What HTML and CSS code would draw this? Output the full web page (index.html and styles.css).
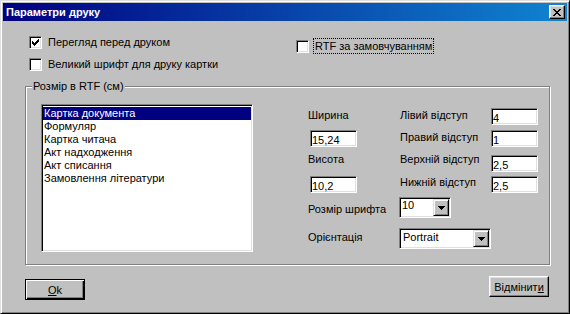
FILE: index.html
```html
<!DOCTYPE html>
<html lang="uk">
<head>
  <meta charset="UTF-8">
  <title>Параметри друку</title>
  <link rel="stylesheet" href="styles.css">
</head>
<body>
  <div class="window">
    <div class="titlebar">
      <span class="titlebar__text">Параметри друку</span>
      <button class="titlebar__close" type="button">
        <svg width="8" height="7" viewBox="0 0 8 7" shape-rendering="crispEdges"><path d="M0 0h2v1H0z M6 0h2v1H6z M1 1h2v1H1z M5 1h2v1H5z M2 2h4v1H2z M3 3h2v1H3z M2 4h4v1H2z M1 5h2v1H1z M5 5h2v1H5z M0 6h2v1H0z M6 6h2v1H6z" fill="#000"/></svg>
      </button>
    </div>

    <div class="dialog">
      <div class="options">
        <div class="options__col">
          <label class="check">
            <span class="check__box">
              <svg width="7" height="7" viewBox="0 0 7 7" shape-rendering="crispEdges"><path d="M0 2h1v3H0z M1 3h1v3H1z M2 4h1v3H2z M3 3h1v3H3z M4 2h1v3H4z M5 1h1v3H5z M6 0h1v3H6z" fill="#000"/></svg>
            </span>
            <span class="check__text">Перегляд перед друком</span>
          </label>
          <label class="check">
            <span class="check__box"></span>
            <span class="check__text">Великий шрифт для друку картки</span>
          </label>
        </div>
        <div class="options__col options__col--right">
          <label class="check check--focus">
            <span class="check__box"></span>
            <span class="check__text">RTF за замовчуванням</span>
          </label>
        </div>
      </div>

      <div class="group">
        <span class="group__title">Розмір в RTF (см)</span>
        <ul class="list">
          <li class="list__item list__item--selected">Картка документа</li>
          <li class="list__item">Формуляр</li>
          <li class="list__item">Картка читача</li>
          <li class="list__item">Акт надходження</li>
          <li class="list__item">Акт списання</li>
          <li class="list__item">Замовлення літератури</li>
        </ul>

        <div class="fields">
          <span class="fields__label fields__label--r1">Ширина</span>
          <span class="fields__label fields__label--r1">Лівий відступ</span>
          <span class="edit">4</span>

          <span class="edit edit--size">15,24</span>
          <span class="fields__label fields__label--r2">Правий відступ</span>
          <span class="edit">1</span>

          <span class="fields__label fields__label--r3">Висота</span>
          <span class="fields__label fields__label--r3">Верхній відступ</span>
          <span class="edit">2,5</span>

          <span class="edit edit--size">10,2</span>
          <span class="fields__label fields__label--r4">Нижній відступ</span>
          <span class="edit">2,5</span>

          <span class="fields__label fields__label--r5">Розмір шрифта</span>
          <div class="combo combo--short">
            <span class="combo__value">10</span>
            <span class="combo__btn">
              <svg width="7" height="4" viewBox="0 0 7 4" shape-rendering="crispEdges"><path d="M0 0h7v1H0z M1 1h5v1H1z M2 2h3v1H2z M3 3h1v1H3z" fill="#000"/></svg>
            </span>
          </div>

          <span class="fields__label fields__label--r6">Орієнтація</span>
          <div class="combo combo--wide">
            <span class="combo__value">Portrait</span>
            <span class="combo__btn">
              <svg width="7" height="4" viewBox="0 0 7 4" shape-rendering="crispEdges"><path d="M0 0h7v1H0z M1 1h5v1H1z M2 2h3v1H2z M3 3h1v1H3z" fill="#000"/></svg>
            </span>
          </div>
        </div>
      </div>

      <div class="buttons">
        <button class="btn btn--default" type="button"><u>O</u>k</button>
        <button class="btn" type="button">Відмінит<u>и</u></button>
      </div>
    </div>
  </div>
</body>
</html>
```

FILE: styles.css
```css
*,
*::before,
*::after {
  box-sizing: border-box;
}
body {
  margin: 0;
  background: #c0c0c0;
  color: #000;
  font-family: "Liberation Sans", Arial, sans-serif;
  font-size: 11px;
}
button {
  font: inherit;
  color: #000;
}

/* window frame */
.window {
  width: 570px;
  height: 314px;
  padding: 2px;
  background: #c0c0c0;
  border: 1px solid;
  border-color: #dfdfdf #000 #000 #dfdfdf;
  box-shadow: inset 1px 1px #fff, inset -1px -1px #808080;
}
.titlebar {
  height: 18px;
  display: flex;
  align-items: center;
  justify-content: space-between;
  padding: 0 2px 0 3px;
  background: linear-gradient(to right, #000080, #1084d0);
  color: #fff;
  font-weight: bold;
}
.titlebar__close {
  width: 16px;
  height: 14px;
  padding: 0;
  display: flex;
  align-items: center;
  justify-content: center;
  background: #c0c0c0;
  border: 1px solid;
  border-color: #fff #000 #000 #fff;
  box-shadow: inset -1px -1px #808080, inset 1px 1px #dfdfdf;
}
.titlebar__close svg {
  display: block;
}

.dialog {
  padding: 15px 0 0 22px;
}

/* checkboxes */
.options {
  display: flex;
  padding-left: 4px;
}
.options__col {
  width: 267px;
  display: flex;
  flex-direction: column;
  gap: 9px;
}
.options__col--right {
  margin-top: 4px;
}
.check {
  display: flex;
  align-items: center;
  gap: 6px;
  height: 13px;
  line-height: 13px;
  white-space: nowrap;
}
.check__box {
  flex: none;
  width: 13px;
  height: 13px;
  display: flex;
  align-items: center;
  justify-content: center;
  background: #fff;
  border: 1px solid;
  border-color: #808080 #fff #fff #808080;
  box-shadow: inset 1px 1px #000, inset -1px -1px #dfdfdf;
}
.check__box svg {
  display: block;
}
.check--focus {
  gap: 4px;
}
.check--focus .check__text {
  margin-top: -2px;
  padding: 0 1px;
  line-height: 14px;
  border: 1px dotted #000;
}

/* group box */
.group {
  position: relative;
  margin-top: 15px;
  width: 525px;
  height: 179px;
  display: flex;
  align-items: flex-start;
  padding: 17px 0 0 15px;
  border: 1px solid #808080;
  box-shadow: inset 1px 1px #fff, 1px 1px #fff;
}
.group__title {
  position: absolute;
  top: -7px;
  left: 6px;
  padding: 0 1px;
  line-height: 13px;
  background: #c0c0c0;
}

.list {
  flex: none;
  width: 212px;
  height: 148px;
  margin: 0;
  padding: 2px 1px;
  list-style: none;
  background: #fff;
  border: 1px solid;
  border-color: #808080 #fff #fff #808080;
  box-shadow: inset 1px 1px #000, inset -1px -1px #dfdfdf;
}
.list__item {
  height: 13px;
  line-height: 13px;
  padding-left: 1px;
  white-space: nowrap;
}
.list__item--selected {
  background: #000080;
  color: #fff;
}

/* size fields */
.fields {
  margin: 4px 0 0 55px;
  display: grid;
  grid-template-columns: 92px 91px 48px;
  grid-template-rows: 22px 25px 21px 21px 31px 21px;
  align-items: start;
}
.fields__label {
  line-height: 17px;
  white-space: nowrap;
}
.fields__label--r1 {
  margin-top: -1px;
}
.fields__label--r2 {
  margin-top: -1px;
}
.fields__label--r3 {
  margin-top: -4px;
}
.fields__label--r4 {
  margin-top: -2px;
}
.fields__label--r5 {
  margin-top: 4px;
}
.fields__label--r6 {
  margin-top: 1px;
}
.edit {
  width: 47px;
  height: 17px;
  padding: 4px 0 0 1px;
  line-height: 11px;
  background: #fff;
  border: 1px solid;
  border-color: #808080 #fff #fff #808080;
  box-shadow: inset 1px 1px #000, inset -1px -1px #dfdfdf;
}
.edit--size {
  margin-left: 2px;
}

.combo {
  grid-column: 2 / 4;
  justify-self: start;
  margin-left: -1px;
  height: 21px;
  display: flex;
  padding: 1px;
  background: #fff;
  border: 1px solid;
  border-color: #808080 #fff #fff #808080;
  box-shadow: inset 1px 1px #000, inset -1px -1px #dfdfdf;
}
.combo--short {
  width: 52px;
}
.combo--wide {
  width: 92px;
}
.combo__value {
  flex: 1;
  padding-left: 1px;
  line-height: 13px;
}
.combo--wide .combo__value {
  padding-left: 2px;
  padding-top: 1px;
}
.combo__btn {
  width: 16px;
  height: 17px;
  display: flex;
  align-items: center;
  justify-content: center;
  background: #c0c0c0;
  border: 1px solid;
  border-color: #dfdfdf #000 #000 #dfdfdf;
  box-shadow: inset 1px 1px #fff, inset -1px -1px #808080;
}
.combo__btn svg {
  display: block;
}

/* bottom buttons */
.buttons {
  width: 524px;
  margin-top: 11px;
  display: flex;
  justify-content: space-between;
  align-items: flex-start;
}
.btn {
  width: 60px;
  height: 21px;
  padding: 0;
  background: #c0c0c0;
  border: 1px solid;
  border-color: #fff #000 #000 #fff;
  box-shadow: inset -1px -1px #808080, inset 1px 1px #dfdfdf;
}
.btn--default {
  margin-top: 3px;
  border-color: #000;
  box-shadow: inset 1px 1px #fff, inset -1px -1px #000, inset -2px -2px #808080;
}
```
